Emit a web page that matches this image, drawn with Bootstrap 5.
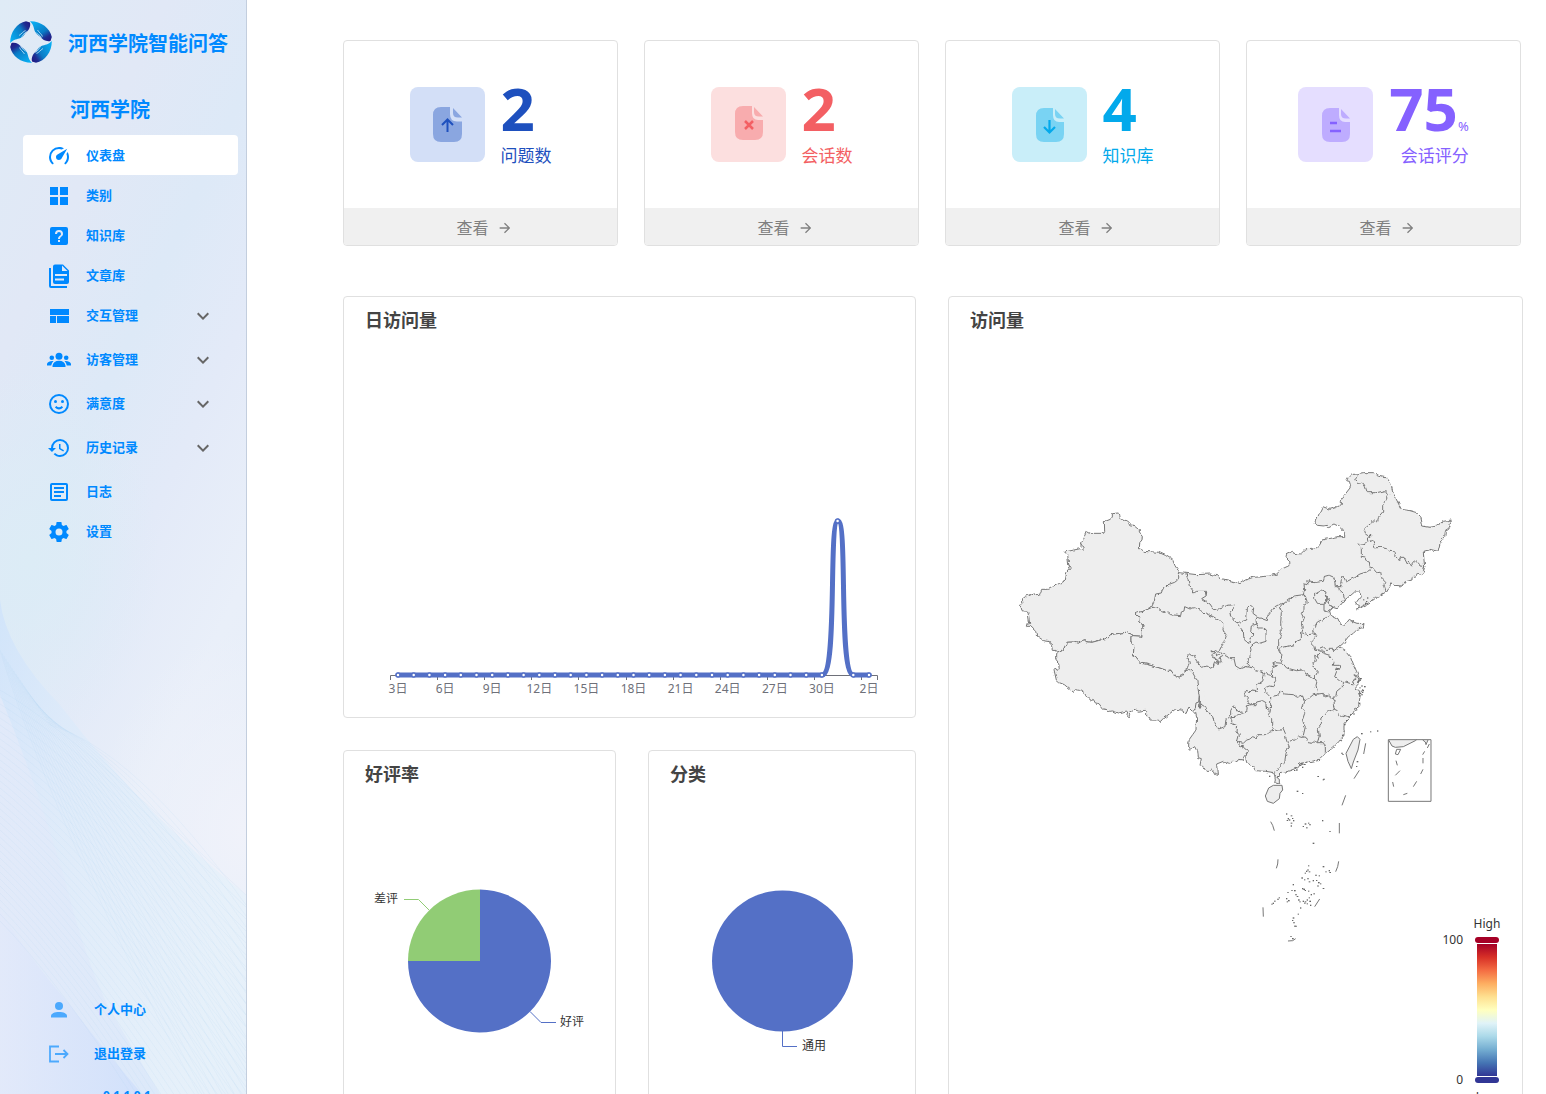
<!DOCTYPE html>
<html lang="zh-CN">
<head>
<meta charset="utf-8">
<meta name="viewport" content="width=device-width, initial-scale=1">
<title>河西学院智能问答</title>
<link href="https://cdn.jsdelivr.net/npm/bootstrap@5.3.0/dist/css/bootstrap.min.css" rel="stylesheet">
<style>
body{font-family:"Noto Sans","Noto Sans CJK SC",sans-serif;background:#fff}
.side{width:247px;border-right:1px solid #c3cede;background:linear-gradient(115deg,#dfebf6 0%,#e1e8f6 22%,#dde9f7 38%,#e3eaf8 52%,#e9eff9 68%,#e4edf9 100%);color:#0089ff}
.side-art{position:absolute;inset:0;width:100%;height:100%}
.side-in{position:relative}
.brand{padding:21px 0 0 10px;gap:16px;font-size:20px;line-height:46px;height:63px;color:#0089ff}
.school{padding-left:70px;margin:31px 0 9px;font-size:20px;line-height:32px;color:#0089ff}
.side .nav-link{height:40px;margin:0 8px 0 23px;padding:2px 23px 0 24px;gap:15px;font-size:13px;font-weight:700;color:#0089ff;border-radius:4px}
.side .nav-link.active{background:#fff}
.side .nav-link.more{margin-bottom:4px}
.side .nav-link svg{flex:none;width:24px;height:24px;fill:currentColor}
.side .nav-link .chev{color:#666}
.foot-nav{height:105px;overflow:hidden}
.foot-nav .nav-link{gap:23px;margin-bottom:4px}
.foot-nav .nav-link svg{opacity:.65}
.ver{padding:9px 0 0 103px;font-size:12px;line-height:20px;font-weight:700}
.main{padding:40px 23px 0 96px;min-width:0}
.stats{display:grid;grid-template-columns:repeat(4,1fr);gap:26px;margin-right:2px}
.panels{display:grid;grid-template-columns:573fr 575fr;gap:32px;margin-top:50px}
.pies{display:grid;grid-template-columns:273fr 268fr;gap:32px;margin-top:32px}
.box{border:1px solid #e0e0e0;border-radius:4px;overflow:hidden;background:#fff}
.stat-body{height:167px;gap:16px}
.ico{width:75px;height:75px;border-radius:8px}
.num{font-size:60px;font-weight:700;line-height:54px}
.unit{font-size:13px;font-weight:400;line-height:1}
.cap{font-size:17px;line-height:24px;margin-top:9px}
.view{height:37px;padding:2px 0 0 8px;gap:8px;background:#f0f0f0;color:#808080;font-size:16px;text-decoration:none}
.t-blue{color:#1e50be}.t-blue .ico{background:#d3dff7}
.t-red{color:#f35f63}.t-red .ico{background:#fcdfdf}
.t-cyan{color:#03a9eb}.t-cyan .ico{background:#c9eef9}
.t-vio{color:#8561ff}.t-vio .ico{background:#e5deff}
.ttl{font-size:18px;line-height:32px;font-weight:700;color:#444;margin:0;padding:7px 21px 0}
.chart{display:block;width:100%;height:auto;font-size:12px}
.outl{fill:none;stroke:#777;stroke-width:1;stroke-linejoin:round}
.outl *{vector-effect:non-scaling-stroke}
.land{fill:#eee;stroke:none}
</style>
<script src="https://cdn.jsdelivr.net/npm/bootstrap@5.3.0/dist/js/bootstrap.bundle.min.js"></script>
</head>
<body>
<div class="d-flex vh-100 overflow-hidden">
<aside class="side position-relative flex-shrink-0 overflow-hidden">
  <svg class="side-art" viewBox="0 0 246 1094" preserveAspectRatio="none" aria-hidden="true">
    <defs>
      <linearGradient id="w1" x1="0" y1="0" x2="1" y2=".6"><stop offset="0" stop-color="#cfe3fb"/><stop offset=".3" stop-color="#dceafa"/><stop offset="1" stop-color="#e6f1fa"/></linearGradient>
      <linearGradient id="w2" x1="0" y1="0" x2="1" y2="0"><stop offset="0" stop-color="#e3eaf9"/><stop offset="1" stop-color="#dbe8fa"/></linearGradient>
      <linearGradient id="w3" x1="0" y1="0" x2="1" y2="0"><stop offset="0" stop-color="#e2e9fa"/><stop offset="1" stop-color="#cfdffb"/></linearGradient>
      <radialGradient id="w4"><stop offset="0" stop-color="#f0f2fa"/><stop offset="1" stop-color="#f0f2fa" stop-opacity="0"/></radialGradient>
      <radialGradient id="w5"><stop offset="0" stop-color="#dcecf6"/><stop offset="1" stop-color="#dcecf6" stop-opacity="0"/></radialGradient>
    </defs>
    <ellipse cx="30" cy="560" rx="130" ry="190" fill="url(#w5)"/>
    <ellipse cx="246" cy="830" rx="150" ry="200" fill="url(#w4)"/>
    <path fill="url(#w1)" opacity=".8" d="M0 600Q6 650 60 705Q140 810 246 895V1094H0z"/>
    <path fill="url(#w2)" opacity=".85" d="M0 695Q35 780 65 880Q85 960 110 1010L160 1094H0z"/>
    <path fill="url(#w3)" opacity=".8" d="M0 910Q30 960 70 1005Q100 1045 142 1094H0z"/>
    <g id="rays" fill="none" stroke="#a9cdf2" stroke-opacity=".13" stroke-width="1"></g>
  </svg>
  <div class="side-in d-flex flex-column h-100">
    <div class="brand d-flex fw-bold">
      <svg width="42" height="42" viewBox="0 0 42 42" aria-hidden="true">
        <defs><linearGradient id="lg" x1="0" y1=".8" x2="1" y2=".1"><stop offset="0" stop-color="#08aef2"/><stop offset=".55" stop-color="#0a7cc6"/><stop offset=".8" stop-color="#1f2b91"/><stop offset="1" stop-color="#201a82"/></linearGradient>
        <g id="hand"><path fill="url(#lg)" d="M.2 22C0 11 7 2 16 .2L20 1.500C21 6 18.500 9.500 16 11.500C14.500 13 13.500 16 10.500 17C7 18.500 4 18 .2 22z"/><path d="M9 14.500C12 12.500 13 10.500 15.500 9.500M11.500 17C12.500 14.500 14 12.500 16.500 10.500" fill="none" stroke="#bfe6fa" stroke-width=".8"/></g></defs>
        <use href="#hand"/><use href="#hand" transform="rotate(90 21 21)"/><use href="#hand" transform="rotate(180 21 21)"/><use href="#hand" transform="rotate(270 21 21)"/>
      </svg>
      <span>河西学院智能问答</span>
    </div>
    <h1 class="school fw-bold">河西学院</h1>
    <nav class="nav flex-column flex-nowrap">
      <a class="nav-link active d-flex align-items-center" href="#"><svg viewBox="0 0 24 24"><path d="M12,16A3,3 0 0,1 9,13C9,11.88 9.61,10.9 10.5,10.39L20.21,4.77L14.68,14.35C14.18,15.33 13.17,16 12,16M12,3C13.81,3 15.5,3.5 16.97,4.32L14.87,5.53C14,5.19 13,5 12,5A8,8 0 0,0 4,13C4,15.21 4.89,17.21 6.34,18.65H6.35C6.74,19.04 6.74,19.67 6.35,20.06C5.96,20.45 5.32,20.45 4.93,20.07V20.07C3.12,18.26 2,15.76 2,13A10,10 0 0,1 12,3M22,13C22,15.76 20.88,18.26 19.07,20.07V20.07C18.68,20.45 18.05,20.45 17.66,20.06C17.27,19.67 17.27,19.04 17.66,18.65V18.65C19.11,17.2 20,15.21 20,13C20,12 19.81,11 19.46,10.1L20.67,8C21.5,9.5 22,11.18 22,13Z"/></svg>仪表盘</a>
      <a class="nav-link d-flex align-items-center" href="#"><svg viewBox="0 0 24 24"><path d="M3,11H11V3H3M3,21H11V13H3M13,21H21V13H13M13,3V11H21V3"/></svg>类别</a>
      <a class="nav-link d-flex align-items-center" href="#"><svg viewBox="0 0 24 24"><path fill-rule="evenodd" d="M11,18H13V16H11V18M12,6A4,4 0 0,0 8,10H10A2,2 0 0,1 12,8A2,2 0 0,1 14,10C14,12 11,11.75 11,15H13C13,12.75 16,12.5 16,10A4,4 0 0,0 12,6M5,3H19A2,2 0 0,1 21,5V19A2,2 0 0,1 19,21H5A2,2 0 0,1 3,19V5A2,2 0 0,1 5,3Z"/></svg>知识库</a>
      <a class="nav-link d-flex align-items-center" href="#"><svg viewBox="0 0 24 24"><path fill-rule="evenodd" d="M15 7H20.500L15 1.500V7M8 0.500H16L22 6.500V18A2 2 0 0 1 20 20H8A2 2 0 0 1 6 18V2.500A2 2 0 0 1 8 .5M4 4V22H20V24H4A2 2 0 0 1 2 22V4H4M8 10V12H20V10H8M8 14.500V16.500H17V14.500H8"/></svg>文章库</a>
      <a class="nav-link more d-flex align-items-center" href="#"><svg viewBox="0 0 24 24"><path d="M3,19H9V12H3V19M10,19H22V12H10V19M3,5V11H22V5H3Z"/></svg><span class="flex-grow-1">交互管理</span><svg class="chev" viewBox="0 0 24 24"><path d="M7.410 8.580L12 13.170L16.590 8.580L18 10L12 16L6 10z"/></svg></a>
      <a class="nav-link more d-flex align-items-center" href="#"><svg viewBox="0 0 24 24"><circle cx="12" cy="8.200" r="3.500"/><circle cx="4.800" cy="9.800" r="2.300"/><circle cx="19.200" cy="9.800" r="2.300"/><path d="M5.500 19V17.500Q6.500 12.800 12 12.800T18.500 17.500V19zM0 17.500V15.800Q1.500 12.600 6.500 13Q4.500 15 4.200 17.500zM24 17.500V15.800Q22.500 12.600 17.500 13Q19.500 15 19.800 17.500z"/></svg><span class="flex-grow-1">访客管理</span><svg class="chev" viewBox="0 0 24 24"><path d="M7.410 8.580L12 13.170L16.590 8.580L18 10L12 16L6 10z"/></svg></a>
      <a class="nav-link more d-flex align-items-center" href="#"><svg viewBox="0 0 24 24"><circle cx="12" cy="12" r="9" fill="none" stroke="currentColor" stroke-width="2"/><circle cx="8.500" cy="9.500" r="1.500"/><circle cx="15.500" cy="9.500" r="1.500"/><path d="M8.600 14.700Q12 18 15.400 14.700" fill="none" stroke="currentColor" stroke-width="2"/></svg><span class="flex-grow-1">满意度</span><svg class="chev" viewBox="0 0 24 24"><path d="M7.410 8.580L12 13.170L16.590 8.580L18 10L12 16L6 10z"/></svg></a>
      <a class="nav-link more d-flex align-items-center" href="#"><svg viewBox="0 0 24 24"><path d="M13.5,8H12V13L16.28,15.54L17,14.33L13.5,12.25V8M13,3A9,9 0 0,0 4,12H1L4.960,16.030L9,12H6A7,7 0 0,1 13,5A7,7 0 0,1 20,12A7,7 0 0,1 13,19C11.070,19 9.320,18.210 8.060,16.940L6.640,18.360C8.270,20 10.5,21 13,21A9,9 0 0,0 22,12A9,9 0 0,0 13,3"/></svg><span class="flex-grow-1">历史记录</span><svg class="chev" viewBox="0 0 24 24"><path d="M7.410 8.580L12 13.170L16.590 8.580L18 10L12 16L6 10z"/></svg></a>
      <a class="nav-link d-flex align-items-center" href="#"><svg viewBox="0 0 24 24"><rect x="4" y="4" width="16" height="16" rx="1" fill="none" stroke="currentColor" stroke-width="2"/><path d="M7 7H17V9H7zM7 11H17V13H7zM7 15H14V17H7z"/></svg>日志</a>
      <a class="nav-link d-flex align-items-center" href="#"><svg viewBox="0 0 24 24"><path d="M12,15.5A3.5,3.5 0 0,1 8.5,12A3.5,3.5 0 0,1 12,8.5A3.5,3.5 0 0,1 15.5,12A3.5,3.5 0 0,1 12,15.5M19.43,12.97C19.47,12.65 19.5,12.33 19.5,12C19.5,11.67 19.47,11.34 19.43,11L21.54,9.37C21.73,9.22 21.78,8.95 21.66,8.73L19.66,5.27C19.54,5.05 19.27,4.96 19.05,5.05L16.56,6.05C16.04,5.66 15.5,5.32 14.87,5.07L14.5,2.42C14.46,2.18 14.25,2 14,2H10C9.75,2 9.54,2.18 9.5,2.42L9.13,5.07C8.5,5.32 7.96,5.66 7.44,6.05L4.95,5.05C4.73,4.96 4.46,5.05 4.34,5.27L2.34,8.73C2.21,8.95 2.27,9.22 2.46,9.37L4.57,11C4.53,11.34 4.5,11.67 4.5,12C4.5,12.33 4.53,12.65 4.57,12.97L2.46,14.63C2.27,14.78 2.21,15.05 2.34,15.27L4.34,18.73C4.46,18.95 4.73,19.03 4.95,18.95L7.44,17.94C7.96,18.34 8.5,18.68 9.13,18.93L9.5,21.58C9.54,21.82 9.75,22 10,22H14C14.25,22 14.46,21.82 14.5,21.58L14.87,18.93C15.5,18.67 16.04,18.34 16.56,17.94L19.05,18.95C19.27,19.03 19.54,18.95 19.66,18.73L21.66,15.27C21.78,15.05 21.73,14.78 21.54,14.63L19.43,12.97Z"/></svg>设置</a>
    </nav>
    <div class="foot-nav mt-auto">
      <a class="nav-link d-flex align-items-center" href="#"><svg viewBox="0 0 24 24"><circle cx="12" cy="8" r="4"/><path d="M12,14C16.420,14 20,15.500 20,18V19.500H4V18C4,15.500 7.580,14 12,14Z"/></svg>个人中心</a>
      <a class="nav-link d-flex align-items-center" href="#"><svg viewBox="0 0 24 24"><path d="M12 4.500H3V19.500H12M8 12H20M16.500 8L20.500 12L16.500 16" fill="none" stroke="currentColor" stroke-width="1.800"/></svg>退出登录</a>
      <div class="ver">0.1.1.0.1</div>
    </div>
  </div>
</aside>

<main class="main flex-grow-1">
  <section class="stats">
    <article class="box">
      <div class="stat-body t-blue d-flex justify-content-center align-items-center">
        <svg class="ico" viewBox="0 0 75 75"><path opacity=".4" fill="currentColor" d="M31 20H40V27Q40 34.500 47 34.500H52V47Q52 55 44 55H31Q23 55 23 47V28Q23 20 31 20zM43 21L52 30.500H48Q43 30.500 43 26z"/><path d="M37.500 45V33M32 38L37.500 32.500L43 38" fill="none" stroke="currentColor" stroke-width="2"/></svg>
        <div><div class="num">2</div><div class="cap">问题数</div></div>
      </div>
      <a class="view d-flex justify-content-center align-items-center" href="#">查看<svg width="16" height="16" viewBox="0 0 24 24" fill="currentColor"><path d="M4,11V13H16L10.5,18.5L11.920,19.920L19.840,12L11.920,4.080L10.5,5.5L16,11H4Z"/></svg></a>
    </article>
    <article class="box">
      <div class="stat-body t-red d-flex justify-content-center align-items-center">
        <svg class="ico" viewBox="0 0 75 75"><path opacity=".4" fill="currentColor" d="M32 19H41V26Q41 33 47 33H52V45Q52 53 44 53H32Q24 53 24 45V27Q24 19 32 19zM43 20L52 29.500H48Q43 29.500 43 25z"/><path d="M34 34L42 42M42 34L34 42" fill="none" stroke="currentColor" stroke-width="2.500"/></svg>
        <div><div class="num">2</div><div class="cap">会话数</div></div>
      </div>
      <a class="view d-flex justify-content-center align-items-center" href="#">查看<svg width="16" height="16" viewBox="0 0 24 24" fill="currentColor"><path d="M4,11V13H16L10.5,18.5L11.920,19.920L19.840,12L11.920,4.080L10.5,5.5L16,11H4Z"/></svg></a>
    </article>
    <article class="box">
      <div class="stat-body t-cyan d-flex justify-content-center align-items-center">
        <svg class="ico" viewBox="0 0 75 75"><path opacity=".4" fill="currentColor" d="M32 21H41V28Q41 35 47 35H52V47Q52 55 44 55H32Q24 55 24 47V29Q24 21 32 21zM43 22L52 31.500H48Q43 31.500 43 27z"/><path d="M37.500 33V45M32 40L37.500 45.500L43 40" fill="none" stroke="currentColor" stroke-width="2.200"/></svg>
        <div><div class="num">4</div><div class="cap">知识库</div></div>
      </div>
      <a class="view d-flex justify-content-center align-items-center" href="#">查看<svg width="16" height="16" viewBox="0 0 24 24" fill="currentColor"><path d="M4,11V13H16L10.5,18.5L11.920,19.920L19.840,12L11.920,4.080L10.5,5.5L16,11H4Z"/></svg></a>
    </article>
    <article class="box">
      <div class="stat-body t-vio d-flex justify-content-center align-items-center">
        <svg class="ico" viewBox="0 0 75 75"><path opacity=".4" fill="currentColor" d="M32 21H41V28Q41 35 47 35H52V47Q52 55 44 55H32Q24 55 24 47V29Q24 21 32 21zM43 22L52 31.500H48Q43 31.500 43 27z"/><path d="M32 36H39M32 44H43" fill="none" stroke="currentColor" stroke-width="2.500"/></svg>
        <div class="text-end"><div class="num">75<span class="unit">%</span></div><div class="cap">会话评分</div></div>
      </div>
      <a class="view d-flex justify-content-center align-items-center" href="#">查看<svg width="16" height="16" viewBox="0 0 24 24" fill="currentColor"><path d="M4,11V13H16L10.5,18.5L11.920,19.920L19.840,12L11.920,4.080L10.5,5.5L16,11H4Z"/></svg></a>
    </article>
  </section>

  <section class="panels">
    <div>
      <article class="box">
        <h2 class="ttl">日访问量</h2>
        <svg class="chart" viewBox="344 336 571 381" role="img" aria-label="日访问量">
          <path id="axis" d="M390.500 680V675.500H877.500V680" fill="none" stroke="#6e7079"/>
          <path d="M398 675H822C838 675 828 521 838 521C848 521 838 675 853.500 675H869" fill="none" stroke="#5470c6" stroke-width="5" stroke-linecap="round" stroke-linejoin="round"/>
          <g id="dots" fill="#fff" stroke="#5470c6" stroke-width="1.500"></g>
          <g id="days" fill="#6e7079" text-anchor="middle"></g>
        </svg>
      </article>
      <div class="pies">
        <article class="box">
          <h2 class="ttl">好评率</h2>
          <svg class="chart" viewBox="344 790 271 380" role="img" aria-label="好评率">
            <path d="M480 889.500A71.500 71.500 0 1 1 408 961H480z" fill="#5470c6"/>
            <path d="M480 961V889.500A72 71.500 0 0 0 408 961z" fill="#91cc75"/>
            <path d="M429 910L418.500 899.500H404" fill="none" stroke="#91cc75"/>
            <path d="M530 1011.500L541 1022.500H556" fill="none" stroke="#5470c6"/>
            <g fill="#333"><text x="374" y="903">差评</text><text x="560" y="1026">好评</text></g>
          </svg>
        </article>
        <article class="box">
          <h2 class="ttl">分类</h2>
          <svg class="chart" viewBox="649 790 266 380" role="img" aria-label="分类">
            <circle cx="782.500" cy="961" r="70.500" fill="#5470c6"/>
            <path d="M782.500 1031V1046.500H797" fill="none" stroke="#5470c6"/>
            <text x="802" y="1050" fill="#333">通用</text>
          </svg>
        </article>
      </div>
    </div>
    <article class="box">
      <h2 class="ttl">访问量</h2>
      <svg class="chart" viewBox="949 336 573 834" role="img" aria-label="访问量">
        <defs><linearGradient id="heat" x1="0" y1="1" x2="0" y2="0"><stop offset="0" stop-color="#313695"/><stop offset=".1" stop-color="#4575b4"/><stop offset=".2" stop-color="#74add1"/><stop offset=".3" stop-color="#abd9e9"/><stop offset=".4" stop-color="#e0f3f8"/><stop offset=".5" stop-color="#ffffbf"/><stop offset=".6" stop-color="#fee090"/><stop offset=".7" stop-color="#fdae61"/><stop offset=".8" stop-color="#f46d43"/><stop offset=".9" stop-color="#d73027"/><stop offset="1" stop-color="#a50026"/></linearGradient>
        <filter id="rough" x="0" y="0" width="1" height="1" color-interpolation-filters="sRGB"><feTurbulence type="fractalNoise" baseFrequency=".2" numOctaves="2" seed="4"/><feDisplacementMap in="SourceGraphic" scale="4" xChannelSelector="R" yChannelSelector="G"/></filter></defs>
        <g filter="url(#rough)">
        <!-- mainland fill -->
        <g class="land" transform="translate(1180 460) scale(.33333)">
          <path d="M0 340L17 340 50 344 92 342 112 348 125 356 168 366 180 371 196 360 220 352 270 348 290 342 310 322 327 314 325 302 318 292 320 280 334 274 342 280 362 282 378 266 408 264 420 254 426 240 444 236 474 230 494 230 494 218 478 200 462 192 446 200 412 196 405 190 418 160 428 140 450 148 470 142 484 128 488 112 510 84 514 66 500 62 506 50 526 42 550 38 580 38 596 46 618 50 632 70 640 100 656 132 664 148 690 152 710 158 722 170 728 198 770 198 790 184 814 180 806 196 806 208 796 214 794 230 780 250 774 274 750 268 744 274 730 276 734 320 730 336 722 346 714 336 696 360 674 366 668 378 640 372 628 380 618 396 590 412 572 426 548 438 530 450 538 436 534 420 544 408 540 396 524 396 510 408 494 420 478 440 468 446 455 442 448 450 452 464 474 476 480 492 494 496 508 478 534 490 552 490 550 502 532 508 505 530 490 550 478 560 498 572 512 590 528 630 540 656 535 672 524 684 538 692 540 710 536 738 526 745 520 758 508 770 505 778 492 794 492 826 474 848 460 862 436 882 420 898 384 906 360 912 350 924 330 932 304 938 296 946 292 954 298 958 298 972 284 968 286 960 282 938 254 934 226 932 220 920 200 908 196 890 205 872 192 890 188 900 160 908 130 904 110 912 112 946 104 944 98 930 78 934 70 920 60 916 64 896 52 892 50 872 44 860 26 868 28 838 48 810 50 770 46 750 0 740z"/>
        </g>
        <!-- west -->
        <g class="outl" transform="translate(1010 500) scale(.33333)">
          <path class="land" d="M509 218L540 220 600 700 556 627 424 323 433 303 437 282 454 279 457 270 471 255 494 247 503 240 503 222z"/>
          <path fill="#eee" d="M307 41L328 39 331 56 350 66 358 74 375 77 388 88 388 96 397 106 396 120 389 128 388 146 404 154 446 157 466 166 488 180 495 197 509 218 503 222 503 240 494 247 471 255 457 270 454 279 437 282 433 303 424 323 402 333 376 341 386 349 387 363 402 375 402 383 395 389 396 409 370 407 363 402 348 397 302 404 290 415 246 427 228 425 221 417 202 430 192 426 171 427 160 449 143 456 127 448 122 425 101 422 80 407 77 394 61 379 49 379 50 373 59 371 54 337 37 336 33 321 28 316 36 311 34 299 46 290 71 279 77 287 88 286 95 268 116 268 166 240 170 218 180 206 176 192 173 165 164 156 215 145 219 149 219 141 212 136 229 95 238 100 281 100 284 95 283 65 301 58 307 51z"/>
          <path fill="#eee" d="M143 456L137 460 137 477 146 489 148 507 141 511 136 504 132 509 139 540 148 548 163 554 191 577 196 569 208 571 226 583 241 600 250 598 256 609 267 611 279 627 291 629 295 634 308 633 326 639 350 633 353 639 350 651 355 656 359 643 359 634 372 628 387 634 406 631 410 635 410 648 420 654 419 663 452 664 460 655 470 648 497 627 515 631 528 641 537 621 547 631 556 627 558 609 566 606 568 590 560 540 548 518 535 506 521 515 519 526 504 531 490 524 480 510 472 512 450 504 408 492 388 489 370 468 372 438 363 426 363 409 370 407 363 402 348 397 302 404 290 415 246 427 228 425 221 417 202 430 192 426 171 427 160 449z"/>
          <path fill="#eee" d="M424 323L440 321 455 332 475 339 482 344 512 347 514 336 522 333 524 320 540 327 553 323 575 332 592 343 610 350 628 362 640 376 639 390 650 407 644 425 634 440 628 452 633 460 625 465 608 457 603 462 607 472 623 478 626 490 614 488 609 501 600 505 588 498 578 502 567 493 558 480 553 466 540 461 532 468 538 486 533 505 521 515 519 526 504 531 490 524 480 510 472 512 450 504 408 492 388 489 370 468 372 438 363 426 363 409 370 407 396 409 395 389 402 383 402 375 387 363 386 349 376 341 402 333z"/>
          <path d="M509 218L527 220M568 590V625L572 612 584 620 588 632 604 644M556 627L549 634 556 642"/>
        </g>
        <!-- north and north-east -->
        <g class="outl" transform="translate(1180 460) scale(.33333)">
          <path d="M17 340L50 344 92 342 112 348 125 356 168 366 180 371 196 360 220 352 270 348 290 342 310 322 327 314 325 302 318 292 320 280 334 274 342 280 362 282 378 266 408 264 420 254 426 240 444 236 474 230 494 230 494 218 478 200 462 192 446 200 442 196 432 198 412 196 405 190 418 160 428 140 450 148 470 142 484 134 484 124 488 112 510 84 514 66 500 62 506 50 526 42 550 38 580 38 596 46 618 50 632 70 640 100 656 132 664 148 690 152 710 158 722 170 728 198 750 202 770 198 790 184 814 180 806 190 810 200 806 208 796 214 794 230 780 250 774 274 750 268 744 274 730 276 732 300 734 320 730 336 722 346 714 336 708 348 696 350 696 360 674 366 668 378 640 376 636 368 628 380 618 396 590 412 572 426 548 438 530 450 538 436 526 432 534 420 544 408 540 396 524 396 510 408 494 420 478 440 468 446 455 442 448 450 452 464 474 476 480 492 494 496 508 478 518 484 534 490 552 490 550 502 532 508 520 520 505 530 490 550 478 560 498 572 512 590 520 612 528 630 540 656"/>
          <path d="M526 42L534 48 524 60 534 68 550 70 556 80 562 98 590 98 616 92 626 104 616 124 608 136 608 156 596 170 592 186 584 180 552 208 556 222 572 232 572 222 562 236 564 246 578 240 586 264 600 262 620 266 630 274 648 276 644 286 658 302 662 292 672 292 682 312 688 304 694 318 704 304 712 302 720 318 736 320"/>
          <path d="M562 246L556 254 534 250 544 266 544 292 556 294 562 304 568 306 570 320 578 324 590 338 602 336 606 356 614 364 612 374 618 394M578 324L560 336 540 342 520 354 498 366 492 352 486 350 482 370 486 380 476 380 478 392 490 402 494 416M478 380L466 380 462 352 448 346 434 350 430 364 402 368 388 366 388 358 380 362 384 374 372 372 374 390 370 404 378 410 376 420"/>
          <path d="M404 400L416 400 424 390 438 396 436 406 444 412 440 424 430 430 412 430 404 416zM440 408L450 418 444 430 448 436 456 438 452 450 446 456 432 452 432 432 440 428z"/>
          <path d="M17 340L24 358 28 378 43 398 50 394 62 394 80 394 78 408 65 416 90 432 98 444 110 454 118 444 145 436 162 433 160 446 150 457 152 472 170 488 188 484 200 480 202 446 212 436 221 444 219 460 235 472 262 482 264 468 285 440 300 432 312 430 328 418 340 408 372 404 380 420 382 430 372 432 372 448 364 460 372 476 366 490 370 502 364 518"/>
        </g>
        <!-- centre, south and coast -->
        <g class="outl" transform="translate(1180 580) scale(.33333)">
          <path d="M170 128L190 155 192 178 205 190 214 186 210 176 222 162 212 152 214 138 230 132 228 122 235 112M230 132L236 144 248 144 258 152 258 184 238 190 228 186 214 196 216 208 212 232 202 234 206 254 196 260"/>
          <path d="M118 212L106 214 102 220 93 215 98 228 110 232 112 246 124 246 120 234 128 230 126 222 137 220 143 232 150 236 162 236 167 258 180 266 196 260 210 262 220 264 228 272 250 278 262 284 274 286 276 292 285 290 290 302 278 320 268 318 258 322 254 334 264 344 272 352"/>
          <path d="M253 280L248 304 240 308 232 318 232 332 216 330 208 338 200 330 192 344 202 352 200 368 214 374 228 374 230 366 248 362 258 368 258 382 266 388 272 382"/>
          <path d="M78 392L92 404 98 410 102 424 116 447 135 440 138 418 152 408 152 392 160 378 168 380 170 396 186 392 186 400 200 396 202 384 198 378 214 374M186 400L172 408 156 410 155 430 170 436 168 456 178 464 172 486 190 490 200 480 208 478 218 470 228 474 236 464 262 464 268 454 278 452 275 440 275 416 262 404 270 394 272 382"/>
          <path d="M172 486L180 498 190 496 194 506 205 512 192 530 188 540 176 538 168 548 160 544 148 550 130 544 110 552 112 586 104 584 98 570 92 574 78 574 70 560 60 556 64 536 52 532 50 512 44 500 36 506 26 508 26 490 28 478 38 464 48 450 50 410 46 392"/>
          <path d="M205 512L196 530 200 548 220 560 226 572 254 574 280 578 292 572 296 560 314 546 318 520 328 500 322 488 318 476 316 460 308 442 298 454 290 450 278 452M282 578L286 600 284 608 298 612 298 598 292 594 296 586 304 578 330 572 350 564 360 552 384 546 420 538 436 522 460 502 474 488 492 466 492 434 505 418 508 410 520 398 526 385 536 378 540 350 538 332 524 324 535 312 540 296"/>
          <path d="M322 488L340 478 346 482 354 466 368 470 378 472 384 488 398 490 404 482 412 488 430 488 436 500 436 522"/>
          <path d="M272 350V382M272 350L292 346 302 334 314 342 340 344 352 352 366 346 372 362 366 380 374 400 366 424 376 440 370 466"/>
          <path d="M278 288L276 264 290 258 278 252 286 248 308 250 320 264 350 272 368 270 374 280 384 284 400 294 412 300 408 316 414 342 400 344 388 354 372 360"/>
          <path d="M312 70L300 84 304 100 302 130 304 158 296 180 296 208 306 228 302 240 308 250M296 208L310 202 340 194 350 184 364 178 364 158 384 164 400 162 412 166 402 176 390 188 402 200 404 210 416 212 430 214 436 222 420 216 414 222 418 232 404 226 406 240 396 250 398 262 412 268 410 282 400 294M402 162L398 150 412 126 420 122 440 112 450 106 452 104"/>
          <path d="M404 210L414 212 420 204 430 200 438 208 456 208 462 212 478 200M436 222L450 226 456 238 462 246 460 256 478 256 480 268 468 264 470 274 464 290 480 304 490 304 490 318 482 324 470 334 468 346 460 356 448 344 436 348 430 340 414 342M490 304L510 310 524 312 520 300 528 298 522 284 536 290 540 296"/>
          <path d="M460 356L466 366 460 374 464 388 444 394 436 404 426 414 424 430 414 444 418 468 412 488M464 388L472 392 476 410 490 406 508 410"/>
        </g>
        </g>
        <!-- large islands, sea lines and the inset frame -->
        <g class="outl" transform="translate(1250 720) scale(.33333)">
          <path fill="#eee" d="M56 204L70 196 96 196 98 210 90 220 88 236 70 250 52 244 46 228zM310 58L322 50 330 58 324 90 310 126 304 146 294 124 288 100z"/>
          <path d="M347 70L341 102M328 151L312 176M287 226L276 256M268 309V340M266 424L263 440 257 455M209 537L194 560M137 656L128 662 114 663M39 562L40 590M84 418L83 432 79 445M62 305L68 316 73 332"/>
          <path fill="#eee" d="M416 60L426 78 436 82 460 80 496 62 500 59M518 60L526 66 528 74 534 60"/>
          <rect x="415" y="59" width="128" height="185"/>
          <path d="M440 88H452L444 104 436 102zM438 122L442 136M450 152L436 166M428 186L431 200M472 220L460 224M500 184L490 200M519 148L512 162M519 114V130M524 94L518 104M538 72L532 84"/>
        </g>
        <g id="isles" fill="#666" transform="translate(1250 720) scale(.33333)"></g>
        <!-- value scale -->
        <rect x="1477" y="944" width="20" height="132" fill="url(#heat)"/>
        <rect x="1475" y="937" width="24" height="6" rx="3" fill="#a50026"/>
        <rect x="1475" y="1077" width="24" height="6" rx="3" fill="#313695"/>
        <g fill="#333"><text x="1487" y="928" text-anchor="middle">High</text><text x="1463" y="944" text-anchor="end">100</text><text x="1463" y="1084" text-anchor="end">0</text><text x="1487" y="1101" text-anchor="middle">Low</text></g>
      </svg>
    </article>
  </section>
</main>
</div>
<script>
const NS='http://www.w3.org/2000/svg';
function add(id,tag,attrs,text){const e=document.createElementNS(NS,tag);for(const k in attrs)e.setAttribute(k,attrs[k]);if(text)e.textContent=text;document.getElementById(id).appendChild(e);}
const step=15.7;
for(let i=0;i<31;i++)add('dots','circle',{cx:398+i*step,cy:i===28?521:675,r:2});
['3','6','9','12','15','18','21','24','27','30','2'].forEach((d,i)=>add('days','text',{x:398+i*3*step,y:693},d+'日'));
let ticks='';
for(let i=1;i<11;i++)ticks+='M'+(Math.round(390+i*3*step)+.5)+' 675.5V680';
document.getElementById('axis').setAttribute('d',document.getElementById('axis').getAttribute('d')+ticks);
// small islands, coastal and offshore
[[335,41],[362,36],[383,33],[204,170],[222,178],[220,180],[142,214],[158,221],[59,169],[84,170],[276,100],[279,104],[322,125],[320,140],[110,282],[124,288],[115,296],[112,302],[118,300],[128,296],[131,302],[124,310],[124,318],[160,320],[166,312],[176,310],[180,314],[170,324],[218,302],[240,335],[190,370],
[176,438],[174,450],[178,456],[170,454],[166,460],[220,440],[228,456],[238,452],[240,458],[198,466],[208,468],[156,474],[164,480],[174,476],[178,486],[190,482],[200,482],[206,488],[212,492],[204,498],[220,506],[158,506],[166,512],[162,508],[176,514],[184,524],[192,522],[130,494],[126,512],[134,512],[114,518],[138,524],[142,530],[110,536],[112,546],[116,542],[88,534],[84,538],[74,544],[70,550],[66,553],[146,540],[150,546],[160,544],[166,546],[172,540],[178,534],[180,544],[172,552],[182,556],[164,550],[152,564],[145,583],[130,594],[128,602],[132,608],[134,619],[138,619],[123,650],[128,656],
[330,-118],[326,-116],[332,-124],[336,-102],[330,-96],[344,-100],[338,-82],[332,-80],[326,-78],[336,-76],[330,-72],[328,-50],[320,-30],[312,-18],[290,2],[284,14],[282,34],[278,46],[150,136],[156,130],[164,134],[158,142],[134,152],[140,150],[168,128],[338,-90],[334,-86],[340,-88],[350,-355],[347,-350],[341,-360],[353,-366]]
.forEach(([x,y],i)=>add('isles','rect',{x:x-2,y:y-2,width:i%3?4:5,height:i%2?3:4}));
// fine wave lines behind the menu
for(let i=0;i<34;i++)add('rays','path',{d:`M0 ${690+i*7}Q${70+i} ${730+i*9} 246 ${895+i*12}`});
for(let i=0;i<26;i++)add('rays','path',{d:`M${i*2} ${650+i*3}Q${60+i*3} ${850-i*4} 246 ${1180-i*11}`});
</script>
</body>
</html>
